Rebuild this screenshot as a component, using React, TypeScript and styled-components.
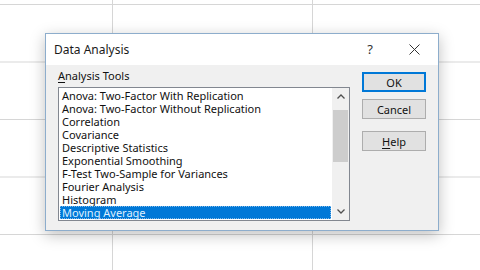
import React, { FC } from "react";
import styled, { createGlobalStyle } from "styled-components";

const GlobalStyle = createGlobalStyle`
  html, body {
    margin: 0;
    padding: 0;
    background: #ffffff;
  }
  body {
    font-family: "Noto Sans", "Open Sans", sans-serif;
  }
`;

const tools: string[] = [
  "Anova: Two-Factor With Replication",
  "Anova: Two-Factor Without Replication",
  "Correlation",
  "Covariance",
  "Descriptive Statistics",
  "Exponential Smoothing",
  "F-Test Two-Sample for Variances",
  "Fourier Analysis",
  "Histogram",
  "Moving Average",
];

export default function App() {
  return (
    <>
      <GlobalStyle />
      <Sheet>
        <Dialog>
          <TitleBar>
            <Title>Data Analysis</Title>
            <TitleButtons>
              <HelpMark>?</HelpMark>
              <CloseIcon />
            </TitleButtons>
          </TitleBar>
          <Body>
            <LeftColumn>
              <Label>
                <u>A</u>nalysis Tools
              </Label>
              <ListBox>
                <Items>
                  {tools.map((tool, i) => (
                    <Item key={tool} selected={i === tools.length - 1}>
                      {tool}
                    </Item>
                  ))}
                </Items>
                <ScrollBar>
                  <Arrow direction="up" />
                  <Track>
                    <Thumb />
                  </Track>
                  <Arrow direction="down" />
                </ScrollBar>
              </ListBox>
            </LeftColumn>
            <Buttons>
              <Button primary>OK</Button>
              <Button>Cancel</Button>
              <Button separated>
                <u>H</u>elp
              </Button>
            </Buttons>
          </Body>
        </Dialog>
      </Sheet>
    </>
  );
}

const CloseIcon: FC = () => (
  <svg width="11" height="11" viewBox="0 0 11 11">
    <path d="M0.5 0.5 L10.5 10.5 M10.5 0.5 L0.5 10.5" stroke="#333" strokeWidth="1" fill="none" />
  </svg>
);

const Arrow: FC<{ direction: "up" | "down" }> = ({ direction }) => (
  <ArrowBox>
    <svg width="8" height="5" viewBox="0 0 8 5">
      {direction === "up" ? (
        <path d="M0.5 4.5 L4 1 L7.5 4.5" stroke="#505050" strokeWidth="1.3" fill="none" />
      ) : (
        <path d="M0.5 0.5 L4 4 L7.5 0.5" stroke="#505050" strokeWidth="1.3" fill="none" />
      )}
    </svg>
  </ArrowBox>
);

const Sheet = styled.div`
  width: 480px;
  height: 270px;
  box-sizing: border-box;
  padding: 33px 0 0 45px;
  background-color: #ffffff;
  background-image: linear-gradient(to right, #d6d6d6 1px, transparent 1px),
    linear-gradient(to bottom, #d6d6d6 1px, transparent 1px);
  background-size: 200px 57.5px;
  background-position: 112px 4px;
  overflow: hidden;
`;

const Dialog = styled.div`
  width: 394px;
  height: 198px;
  box-sizing: border-box;
  border: 1px solid #8dadcc;
  background: #f0f0f0;
  box-shadow: 0 4px 14px rgba(0, 0, 0, 0.25);
  display: flex;
  flex-direction: column;
`;

const TitleBar = styled.div`
  height: 30px;
  background: #ffffff;
  display: flex;
  align-items: center;
  justify-content: space-between;
  padding: 0 18px 1px 8px;
`;

const Title = styled.span`
  font-size: 12px;
  color: #1a1a1a;
`;

const TitleButtons = styled.div`
  display: flex;
  align-items: center;
  gap: 36px;
`;

const HelpMark = styled.span`
  font-size: 13px;
  color: #333;
`;

const Body = styled.div`
  flex: 1;
  display: flex;
  gap: 12px;
  padding: 4px 11px 9px 12px;
`;

const LeftColumn = styled.div`
  display: flex;
  flex-direction: column;
  width: 292px;
`;

const Label = styled.div`
  font-size: 11px;
  line-height: 14px;
  color: #111;
  height: 18px;
  u {
    text-decoration-thickness: 1px;
    text-underline-offset: 2px;
  }
`;

const ListBox = styled.div`
  flex: 1;
  border: 1px solid #828790;
  background: #ffffff;
  display: flex;
`;

const Items = styled.div`
  flex: 1;
  padding: 1px 1px 0 1px;
  display: flex;
  flex-direction: column;
`;

const Item = styled.div<{ selected?: boolean }>`
  height: 13px;
  line-height: 13px;
  font-size: 11px;
  padding-left: 2px;
  white-space: nowrap;
  color: ${(p) => (p.selected ? "#dff0ff" : "#111")};
  background: ${(p) => (p.selected ? "#0078d7" : "transparent")};
  outline: ${(p) => (p.selected ? "1px dotted #7fb8e8" : "none")};
  outline-offset: -1px;
`;

const ScrollBar = styled.div`
  width: 17px;
  background: #f0f0f0;
  display: flex;
  flex-direction: column;
`;

const ArrowBox = styled.div`
  height: 17px;
  display: flex;
  align-items: center;
  justify-content: center;
`;

const Track = styled.div`
  flex: 1;
  padding: 5px 1px 0 1px;
`;

const Thumb = styled.div`
  height: 52px;
  background: #cdcdcd;
`;

const Buttons = styled.div`
  display: flex;
  flex-direction: column;
  gap: 7px;
  padding-top: 3px;
`;

const Button = styled.div<{ primary?: boolean; separated?: boolean }>`
  width: 64px;
  height: 20px;
  box-sizing: border-box;
  margin-top: ${(p) => (p.separated ? "5px" : "0")};
  border: ${(p) => (p.primary ? "2px solid #0078d7" : "1px solid #adadad")};
  background: #e1e1e1;
  font-size: 11px;
  color: #111;
  display: flex;
  align-items: center;
  justify-content: center;
  u {
    text-decoration-thickness: 1px;
    text-underline-offset: 2px;
  }
`;
